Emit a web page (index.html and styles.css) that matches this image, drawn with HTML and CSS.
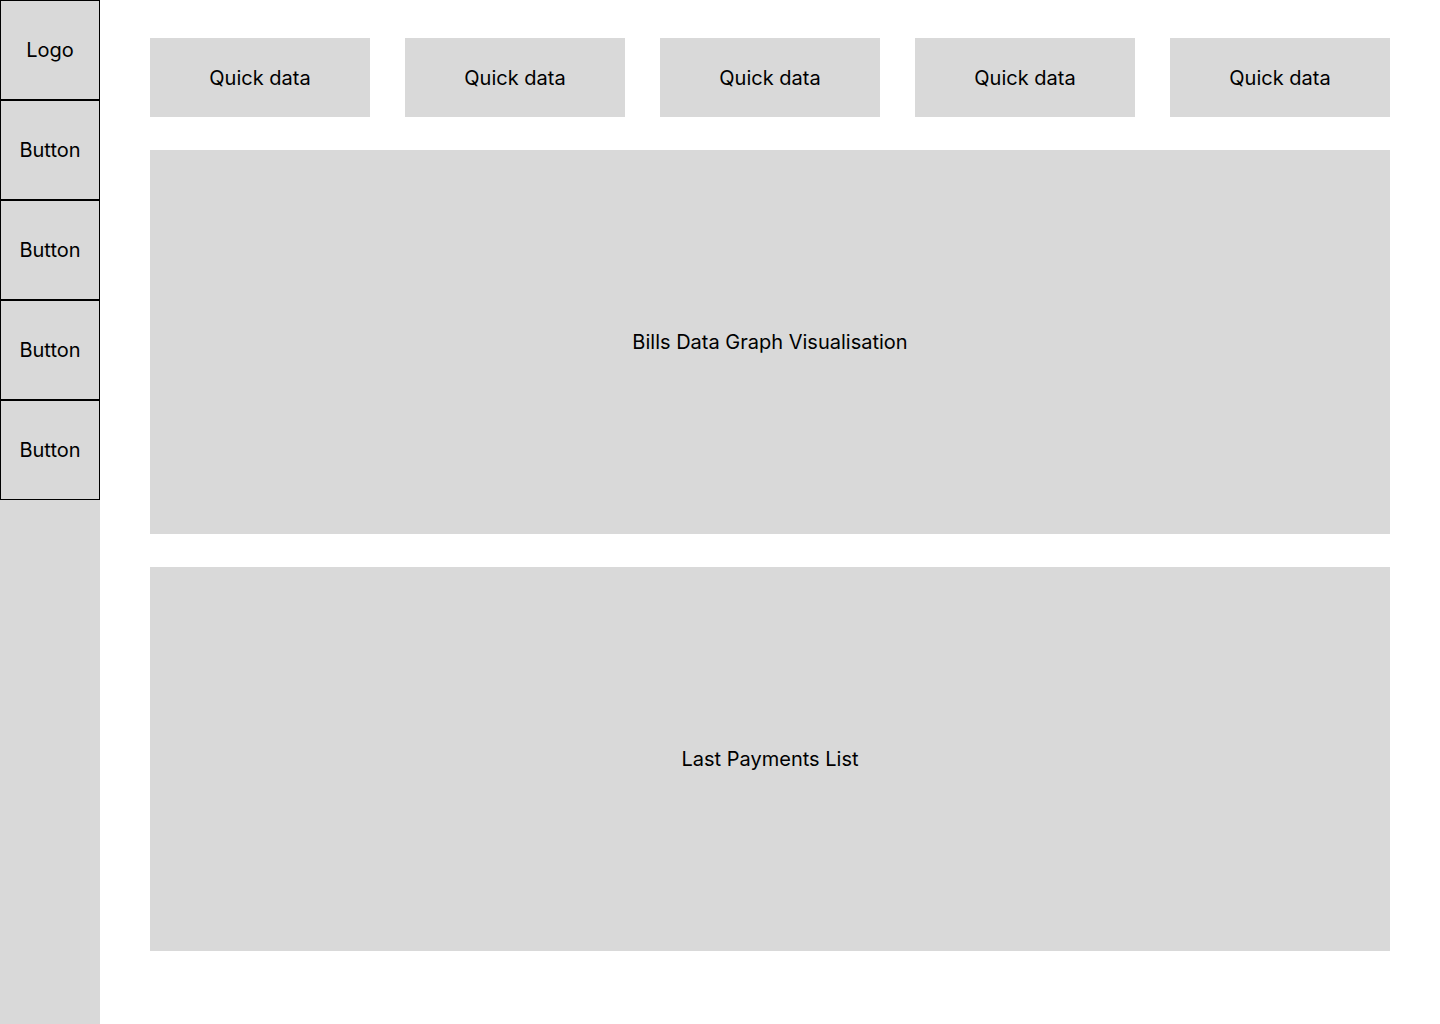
FILE: index.html
```html
<!DOCTYPE html>
<html lang="en">
<head>
<meta charset="utf-8">
<title>Dashboard</title>
<link rel="stylesheet" href="styles.css">
</head>
<body>
<div class="app">
  <nav class="sidebar">
    <div class="nav-item">Logo</div>
    <div class="nav-item">Button</div>
    <div class="nav-item">Button</div>
    <div class="nav-item">Button</div>
    <div class="nav-item">Button</div>
  </nav>
  <main class="main">
    <div class="quick-row">
      <div class="panel quick">Quick data</div>
      <div class="panel quick">Quick data</div>
      <div class="panel quick">Quick data</div>
      <div class="panel quick">Quick data</div>
      <div class="panel quick">Quick data</div>
    </div>
    <div class="panel big">Bills Data Graph Visualisation</div>
    <div class="panel big">Last Payments List</div>
  </main>
</div>
</body>
</html>
```
FILE: styles.css
```css
* { box-sizing: border-box; }
html, body { margin: 0; padding: 0; }
body {
  font-family: Inter, "Noto Sans", sans-serif;
  font-size: 20px;
  color: #000;
  background: #fff;
}
.app {
  display: flex;
  width: 1440px;
  height: 1024px;
}
.sidebar {
  width: 100px;
  flex: 0 0 100px;
  background: #d9d9d9;
  display: flex;
  flex-direction: column;
}
.nav-item {
  width: 100px;
  height: 100px;
  border: 1px solid #000;
  display: flex;
  align-items: center;
  justify-content: center;
}
.main {
  flex: 1;
  padding: 38px 50px 0 50px;
  display: flex;
  flex-direction: column;
  gap: 33px;
}
.quick-row {
  display: flex;
  gap: 35px;
}
.panel {
  background: #d9d9d9;
  display: flex;
  align-items: center;
  justify-content: center;
}
.quick {
  width: 220px;
  height: 79px;
}
.big {
  width: 1240px;
  height: 384px;
}
```
